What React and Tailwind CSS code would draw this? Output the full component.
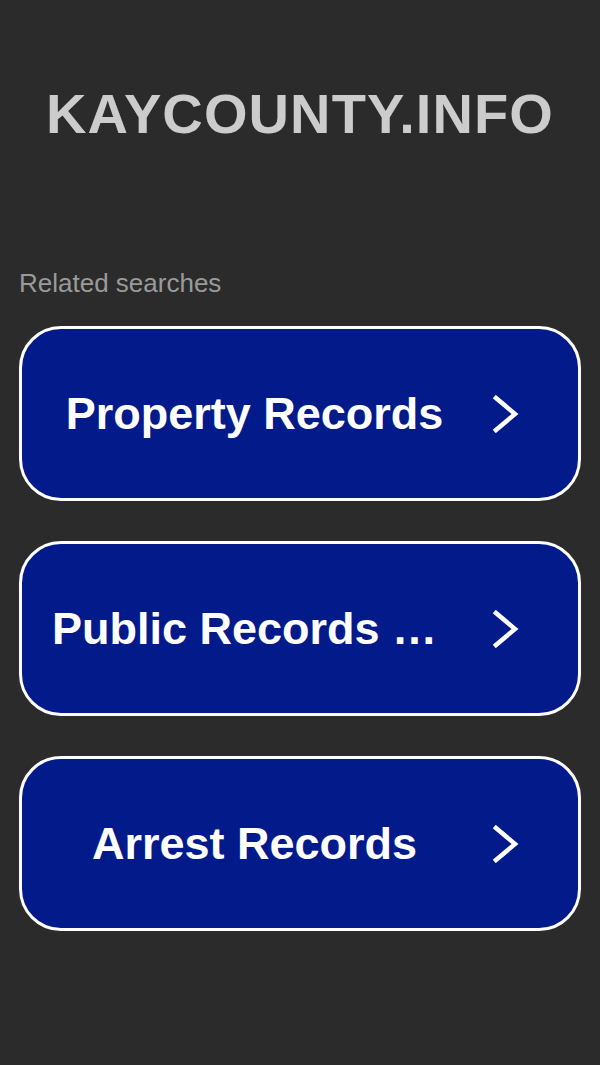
const searches = ['Property Records', 'Public Records Search', 'Arrest Records'];

function Chevron() {
  return (
    <svg width="28" height="38" viewBox="0 0 28 38" fill="none">
      <polyline points="3,3 22,19 3,35" stroke="white" strokeWidth="4.5" strokeLinecap="square" strokeLinejoin="miter" />
    </svg>
  );
}

function SearchButton({ label }) {
  return (
    <div className="flex items-center h-[175px] rounded-[42px] border-[3px] border-white bg-[#021a8a] pr-[22px]">
      <div className="ml-[30px] w-[405px] truncate text-center text-[45px] font-bold leading-none text-white py-2">
        {label}
      </div>
      <div className="flex flex-1 justify-center">
        <Chevron />
      </div>
    </div>
  );
}

export default function App() {
  return (
    <div className="min-h-[1065px] bg-[#2b2b2b] px-[19px] font-['Liberation_Sans',Arial,sans-serif]">
      <div className="pt-[86px] text-center text-[56px] font-bold leading-none tracking-[1.1px] text-[#cccccc]">
        KAYCOUNTY.INFO
      </div>
      <div className="mt-[128px] text-[26px] leading-none text-[#9a9a9a]">Related searches</div>
      <div className="mt-[30px] flex flex-col gap-[40px]">
        {searches.map((s) => (
          <SearchButton key={s} label={s} />
        ))}
      </div>
    </div>
  );
}
